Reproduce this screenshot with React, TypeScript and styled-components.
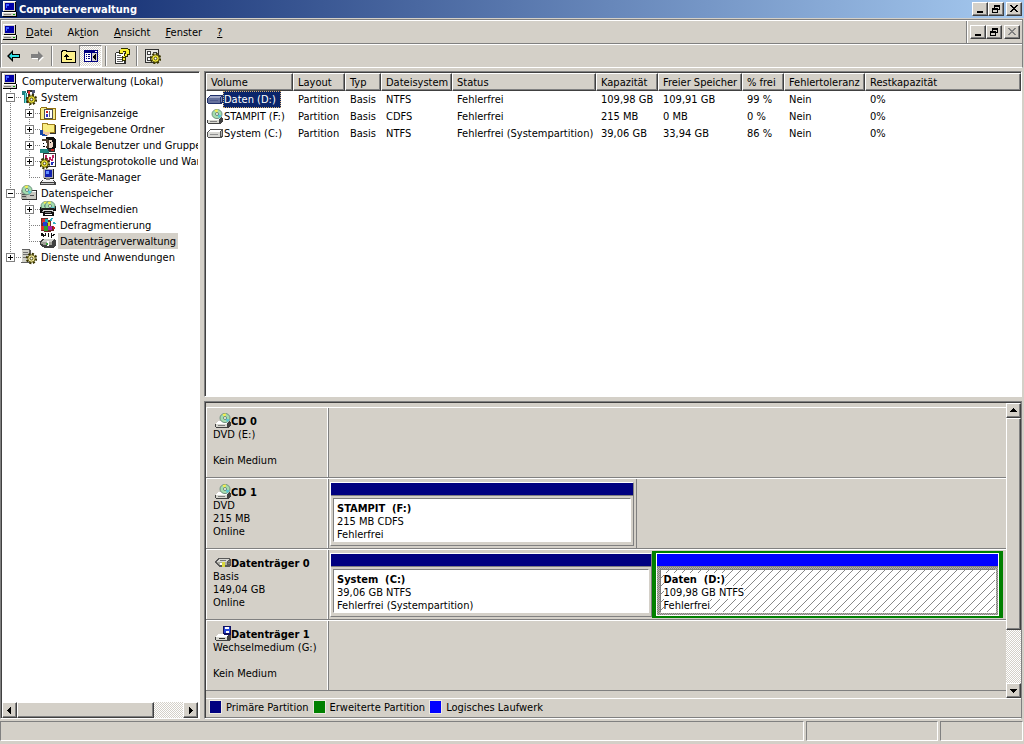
import React from "react";
import styled, { createGlobalStyle, css } from "styled-components";

const face = "#d4d0c8";
const shadow = "#808080";
const dark = "#404040";
const primary = "#000080";
const extended = "#008000";
const logical = "#0000ff";

const GlobalStyle = createGlobalStyle`
  * { box-sizing: border-box; }
  html, body { margin: 0; height: 100%; }
  body {
    background: ${face};
    color: #000;
    font: 11px/13px "DejaVu Sans Condensed", Tahoma, sans-serif;
    overflow: hidden;
  }
  #root { height: 100%; }
  button { font: inherit; color: inherit; padding: 0; border: 0; background: none; }
  ul { list-style: none; margin: 0; padding: 0; }
  svg { display: block; flex: none; }
`;

const raised = css`
  border: 1px solid;
  border-color: #fff ${dark} ${dark} #fff;
  box-shadow: inset -1px -1px ${shadow};
  background: ${face};
`;

const Window = styled.div`
  display: flex;
  flex-direction: column;
  height: 100vh;
`;

const TitleBar = styled.header`
  display: flex;
  align-items: center;
  height: 18px;
  padding: 0 2px;
  background: linear-gradient(to right, #0a246a, #a6caf0);
  color: #fff;
`;

const Title = styled.h1`
  flex: 1;
  margin: 0 0 0 1px;
  font-size: 11px;
  font-weight: bold;
`;

const WindowButtons = styled.div`
  display: flex;
  align-items: center;
`;

const CaptionButton = styled.button<{ $gap?: boolean }>`
  ${raised}
  display: flex;
  align-items: center;
  justify-content: center;
  width: 16px;
  height: 14px;
  margin-left: ${(p) => (p.$gap ? 2 : 0)}px;
`;

const Bars = styled.div`
  margin: 1px 1px 0 0;
  border: 1px solid ${shadow};
  border-bottom-color: #fff;
  box-shadow: inset 1px 1px #fff;
`;

const MenuBar = styled.nav`
  display: flex;
  align-items: center;
  height: 24px;
  padding: 1px 0 0 1px;
  border-bottom: 1px solid ${shadow};
`;

const MenuItem = styled.button`
  margin-left: 1px;
  padding: 2px 7px;
  height: 20px;
`;

const MenuSpace = styled.div`
  flex: 1;
`;

const ChildButtons = styled(WindowButtons)`
  height: 22px;
  padding: 0 2px 0 3px;
  border-left: 1px solid ${shadow};
  box-shadow: inset 1px 0 #fff;
`;

const ToolBar = styled.div`
  display: flex;
  align-items: center;
  height: 23px;
  padding-left: 1px;
  border-top: 1px solid #fff;
`;

const ToolButton = styled.button<{ $pressed?: boolean }>`
  display: flex;
  align-items: center;
  justify-content: center;
  width: 23px;
  height: 22px;
  ${(p) =>
    p.$pressed &&
    css`
      border: 1px solid;
      border-color: ${shadow} #fff #fff ${shadow};
      background: repeating-conic-gradient(#fff 0 25%, ${face} 0 50%) 0 0 / 2px 2px;
    `}
`;

const ToolDivider = styled.span`
  width: 2px;
  height: 20px;
  margin: 0 3px;
  border-left: 1px solid ${shadow};
  border-right: 1px solid #fff;
`;

const Panes = styled.main`
  display: flex;
  gap: 4px;
  flex: 1;
  min-height: 0;
  padding: 3px 2px 0 0;
`;

const sunken = css`
  border: 1px solid;
  border-color: ${shadow} #fff #fff ${shadow};
  box-shadow: inset 1px 1px ${dark};
  padding: 1px 0 0 1px;
`;

const TreePane = styled.aside`
  ${sunken}
  display: flex;
  flex-direction: column;
  width: 200px;
  padding-right: 1px;
  flex: none;
  background: #fff;
`;

const TreeList = styled.ul`
  flex: 1;
  min-height: 0;
  overflow: hidden;
`;

const TreeRow = styled.li`
  display: flex;
  height: 16px;
  white-space: nowrap;
`;

const TreeLabel = styled.span<{ $selected?: boolean }>`
  margin-left: 2px;
  padding: 2px 2px 1px;
  background: ${(p) => (p.$selected ? face : "none")};
`;

const dots = (dir: string) =>
  `repeating-linear-gradient(${dir}, #808080 0 1px, transparent 1px 2px) no-repeat`;

const Guide = styled.span<{ $kind: "pass" | "tee" | "end" | "none" }>`
  flex: none;
  width: 19px;
  height: 16px;
  padding: 4px;
  background: ${(p) =>
    ({
      none: "none",
      pass: `${dots("to bottom")} 8px 0 / 1px 16px`,
      tee: `${dots("to bottom")} 8px 0 / 1px 16px, ${dots("to right")} 8px 8px / 11px 1px`,
      end: `${dots("to bottom")} 8px 0 / 1px 8px, ${dots("to right")} 8px 8px / 11px 1px`,
    })[p.$kind]};
`;

const Expander = styled.button`
  display: block;
  width: 9px;
  height: 9px;
  border: 1px solid ${shadow};
  background: #fff;
`;

const ScrollRow = styled.div<{ $vertical?: boolean }>`
  display: flex;
  flex: none;
  flex-direction: ${(p) => (p.$vertical ? "column" : "row")};
  ${(p) => (p.$vertical ? "width: 15px;" : "height: 16px;")}
  background: repeating-conic-gradient(#fff 0 25%, ${face} 0 50%) 0 0 / 2px 2px;
`;

const ScrollButton = styled.button`
  ${raised}
  display: flex;
  align-items: center;
  justify-content: center;
  flex: none;
  min-width: 15px;
  min-height: 15px;
`;

const ScrollThumb = styled.div<{ $size: string }>`
  ${raised}
  flex: 0 0 ${(p) => p.$size};
`;

const ScrollGap = styled.div`
  flex: 1;
`;

const Detail = styled.section`
  display: flex;
  flex-direction: column;
  gap: 4px;
  flex: 1;
  min-width: 0;
`;

const ListPane = styled.div`
  ${sunken}
  flex: 1;
  min-height: 0;
  overflow: hidden;
  background: #fff;
`;

const VolumeTable = styled.table`
  width: 100%;
  table-layout: fixed;
  border-collapse: separate;
  border-spacing: 0;
  white-space: nowrap;
`;

const HeadCell = styled.th`
  height: 18px;
  padding: 0 0 0 4px;
  text-align: left;
  font-weight: normal;
  overflow: hidden;
  ${raised}
`;

const Cell = styled.td`
  height: 17px;
  padding: 0 0 0 5px;
  overflow: hidden;
`;

const VolumeName = styled.div<{ $selected?: boolean }>`
  display: flex;
  align-items: center;
  margin-left: -4px;
  span {
    padding: 2px 5px 2px 1px;
    ${(p) =>
      p.$selected &&
      css`
        background: #0a246a;
        color: #fff;
        outline: 1px dotted #d8b070;
        outline-offset: -1px;
      `}
  }
`;

const GraphPane = styled.div`
  ${sunken}
  flex: none;
  display: flex;
  flex-direction: column;
  border-right-color: ${shadow};
`;

const GraphBody = styled.div`
  display: flex;
`;

const Disks = styled.div`
  flex: 1;
  min-width: 0;
  padding: 4px 0 7px;
`;

const DiskRow = styled.div`
  display: flex;
  height: 71px;
  border-top: 1px solid #fff;
  border-bottom: 1px solid ${shadow};
`;

const DiskInfo = styled.div`
  flex: none;
  width: 122px;
  padding: 7px 0 0 6px;
  border-left: 1px solid #fff;
  border-right: 1px solid #fff;
  white-space: pre-line;
`;

const DiskName = styled.div`
  display: flex;
  align-items: center;
  height: 13px;
  padding-left: 2px;
  font-weight: bold;
  svg { margin-top: -2px; }
`;

const DiskMap = styled.div`
  display: flex;
  flex: 1;
  min-width: 0;
  border-left: 1px solid ${shadow};
`;

const VolumeFrame = styled.div<{ $share: number; $edge?: boolean }>`
  flex: ${(p) => p.$share} 1 0;
  min-width: 0;
  padding: 3px ${(p) => (p.$edge ? 2 : 0)}px 2px ${(p) => (p.$share === 370 ? 0 : 1)}px;
  ${(p) => p.$edge && `border-right: 1px solid ${shadow};`}
`;

const FreeSpace = styled.div<{ $share: number }>`
  flex: ${(p) => p.$share} 1 0;
`;

const ExtendedFrame = styled.div<{ $share: number }>`
  flex: ${(p) => p.$share} 1 0;
  min-width: 0;
  margin: 1px 3px 1px 0;
  border: 3px solid ${extended};
  border-width: 2px 4px;
`;

const VolumeBox = styled.button<{ $color: string; $selected?: boolean }>`
  display: flex;
  flex-direction: column;
  width: 100%;
  height: 100%;
  text-align: left;
  border: 1px solid;
  border-color: #fff ${shadow} ${shadow} #fff;
  ${(p) => p.$selected && "border-color: #fff;"}
  background: ${(p) =>
    p.$selected
      ? `repeating-conic-gradient(${shadow} 0 25%, #b8b4ac 0 50%) 0 0 / 2px 2px`
      : face};
  &::before {
    content: "";
    width: 100%;
    height: 12px;
    flex: none;
    background: ${(p) => p.$color};
    border-bottom: 1px solid ${shadow};
  }
`;

const VolumeText = styled.span<{ $hatched?: boolean }>`
  display: flex;
  flex-direction: column;
  align-items: flex-start;
  align-self: stretch;
  flex: 1;
  margin: 2px 2px 3px ${(p) => (p.$hatched ? 3 : 2)}px;
  padding: 3px 0 0 3px;
  border: 1px solid;
  border-color: ${shadow} #fff #fff ${shadow};
  background: ${(p) =>
    p.$hatched
      ? "linear-gradient(135deg, #fff 46%, #888 46% 54%, #fff 54%) 0 0 / 8px 8px"
      : "#fff"};
  white-space: pre;
  > * { background: #fff; }
`;

const Legend = styled.div`
  display: flex;
  align-items: center;
  height: 20px;
  padding: 0 0 2px 4px;
  border-top: 1px solid #fff;
  border-bottom: 1px solid ${shadow};
`;

const LegendItem = styled.span<{ $color: string }>`
  display: flex;
  align-items: center;
  margin-right: 5px;
  &::before {
    content: "";
    width: 11px;
    height: 12px;
    margin-right: 5px;
    background: ${(p) => p.$color};
    outline: 1px solid #ece9e0;
  }
`;

const StatusBar = styled.footer`
  display: flex;
  gap: 2px;
  flex: none;
  height: 25px;
  padding: 2px 1px 3px 0;
`;

const StatusCell = styled.div<{ $width?: number }>`
  ${(p) => (p.$width ? `width: ${p.$width}px;` : "flex: 1;")}
  border: 1px solid;
  border-color: ${shadow} #fff #fff ${shadow};
`;

/* ---------- icons ---------- */

const Svg = ({ children, w = 16, h = 16 }: { children: React.ReactNode; w?: number; h?: number }) => (
  <svg width={w} height={h} viewBox={`0 0 ${w} ${h}`} shapeRendering="crispEdges" aria-hidden="true">
    {children}
  </svg>
);

const Computer = () => (
  <Svg>
    <path d="M1 0h13v10H1z" fill="#d4d0c8" />
    <path d="M1 0h12v1H2v9H1z" fill="#fff" />
    <path d="M13 1h1v10H2v-1h11z" fill="#000" />
    <path d="M3 2h9v7H3z" fill="#0000a8" />
    <path d="M4 3h3v2H5v2H4z" fill="#4060ff" />
    <path d="M0 11h15v4H0z" fill="#d4d0c8" />
    <path d="M0 11h14v1H1v3H0z" fill="#fff" />
    <path d="M14 11h1v5H1v-1h13z" fill="#000" />
    <path d="M2 13h7v1H2z" fill="#808080" />
    <path d="M11 13h2v1h-2z" fill="#00a000" />
  </Svg>
);

const Disc = ({ x, y }: { x: number; y: number }) => (
  <g transform={`translate(${x} ${y})`} shapeRendering="auto">
    <ellipse cx="5" cy="5" rx="5" ry="4.6" fill="#a4dcae" stroke="#5c8070" strokeWidth=".8" />
    <path d="M5 5 2.500 1.200A5 4.600 0 0 1 6 .5z" fill="#f6ee50" />
    <path d="M5 5 9.500 6.500A5 4.600 0 0 1 7 9z" fill="#58c8d8" />
    <circle cx="5" cy="5" r="1.5" fill="#fff" stroke="#406050" strokeWidth=".7" />
  </g>
);

const Gear = ({ x, y, fill = "#e4dc38" }: { x: number; y: number; fill?: string }) => (
  <g transform={`translate(${x} ${y})`} shapeRendering="auto">
    <circle cx="5.500" cy="5.500" r="4.500" fill="none" stroke="#383400" strokeWidth="2.400" strokeDasharray="2 1.500" />
    <circle cx="5.500" cy="5.500" r="3.700" fill={fill} stroke="#504a00" strokeWidth=".8" />
    <circle cx="5.500" cy="5.500" r="1.400" fill="#fff" stroke="#403c00" strokeWidth=".9" />
  </g>
);

const CdDrive = () => (
  <Svg>
    <path d="M3 8h11l2 1v3l-2 3H1l-1-1v-3z" fill="#404040" />
    <path d="M3 8h11l-2 3H1z" fill="#fff" />
    <path d="M1 11h11v3H1z" fill="#d8d8d0" />
    <path d="M3 12h7v1H3z" fill="#808080" />
    <Disc x={5} y={0} />
  </Svg>
);

const Drive = ({ selected }: { selected?: boolean }) => (
  <Svg>
    <path d="M3 3h12l1 1v6l-2 2H2l-2-1V6z" fill={selected ? "#20306c" : "#505050"} />
    <path d="M3 4h11l-1 2H1z" fill={selected ? "#a0a8c8" : "#fff"} />
    <path d="M1 6h12v5H1z" fill={selected ? "#65719d" : "#d8d8d4"} />
    <path d="M3 8h8v1H3z" fill={selected ? "#4c588c" : "#909090"} />
    <path d="M14 5h1v5h-1z" fill={selected ? "#7c86b0" : "#b0b0b0"} />
  </Svg>
);

const HardDisk = () => (
  <Svg>
    <path d="M3 3h11l2 2v5l-2 2H5l-5-4V6z" fill="#585858" />
    <path d="M4 4h10l-2 3H1z" fill="#d8d8d4" />
    <path d="M1 7h11v3H4z" fill="#a8a8a0" />
    <path d="M5 5h6v1H5zM13 6h2v1h-2zM13 8h2v1h-2z" fill="#787878" />
    <path d="M7 7h3v5H7z" fill="#d8d840" />
    <path d="M5 8h2v2H5z" fill="#fff" />
  </Svg>
);

const Removable = () => (
  <Svg>
    <path d="M3 8h11l2 1v4l-2 2H1l-1-1v-3z" fill="#404040" />
    <path d="M3 8h11l-2 3H1z" fill="#fff" />
    <path d="M1 11h11v3H1z" fill="#d8d8d0" />
    <path d="M4 12h6v1H4z" fill="#303030" />
    <path d="M8 0h8v9H9V8H8z" fill="#101060" />
    <path d="M9 1h6v6H9z" fill="#2848d8" />
    <path d="M10 1h4v2h-4zM11 5h3v2h-3z" fill="#fff" />
  </Svg>
);

const Tools = () => (
  <Svg>
    <path d="M1 2h4v2h1v10H3V6H1z" fill="#208080" />
    <path d="M4 4h1v10H4z" fill="#60e0e0" />
    <path d="M6 1h5v2H9v9H7V4H6z" fill="#303030" />
    <path d="M7 2h2v3H7z" fill="#e03030" />
    <path d="M11 1h3v3h-1v4h-2z" fill="#505878" />
    <path d="M6 8h2v6H6z" fill="#d02020" />
    <Gear x={5} y={5} />
  </Svg>
);

const EventLog = () => (
  <Svg>
    <path d="M0 3h1V2h6v1h9v12H0z" fill="#907010" />
    <path d="M1 3h5v1h9v10H1z" fill="#f8ec88" />
    <path d="M4 4h9v10H4z" fill="#505050" />
    <path d="M5 5h7v8H5z" fill="#fff" />
    <path d="M6 6h2v2H6z" fill="#d02020" />
    <path d="M6 9h2v3H6z" fill="#3030d0" />
    <path d="M9 6h1v6H9z" fill="#606060" />
  </Svg>
);

const SharedFolder = () => (
  <Svg>
    <path d="M2 2h5l1 1h7v9H2z" fill="#a08020" />
    <path d="M3 3h4v1h7v7H3z" fill="#f8ec80" />
    <path d="M15 4h1v9H4v-1h11z" fill="#303030" />
    <path d="M0 9h3l3 2h4v2l-3 2H4l-4-2z" fill="#f0c8a0" />
    <path d="M0 9h3v4l4 1v1H3l-3-1z" fill="#1848a8" />
  </Svg>
);

const Users = () => (
  <Svg>
    <path d="M6 0h8l2 3v7l-2 3H7z" fill="#101010" />
    <path d="M9 3h3l1 3v3l-2 2H9z" fill="#f0d8c8" />
    <path d="M2 2h5l2 2v7H2V4z" fill="#504030" />
    <path d="M2 4h4l1 3-1 5H3L1 9z" fill="#fff" />
    <path d="M3 6h1v1H3zM3 9h2v1H3zM10 5h1v1h-1z" fill="#000" />
    <path d="M0 12h7l2 2v2H0z" fill="#208880" />
    <path d="M8 12h7v3H9z" fill="#303030" />
    <path d="M11 12h3v2h-3z" fill="#c02020" />
  </Svg>
);

const Performance = () => (
  <Svg>
    <path d="M3 0h13v14H3z" fill="#303030" />
    <path d="M4 1h11v12H4z" fill="#fff" />
    <path d="M5 2h2v3h1v2h1V4h2v2h1V2h2v3h-1v3h-2V7h-1v2H8V8H7V6H5z" fill="#c02060" />
    <path d="M11 9h3v1h-1v2h-2z" fill="#2030c0" />
    <Gear x={-1} y={5} />
  </Svg>
);

const DeviceManager = () => (
  <Svg>
    <path d="M3 0h11v9H3z" fill="#b0b0b0" />
    <path d="M14 0v10H4V9h9V0z" fill="#202020" />
    <path d="M5 1h7v7H5z" fill="#1020b0" />
    <path d="M6 2h3v3H6z" fill="#6090ff" />
    <path d="M2 11h12l2 3v2H0v-2z" fill="#404040" />
    <path d="M3 11h10l1 2H2z" fill="#f0f0f0" />
    <path d="M1 14h13v1H1z" fill="#c0c0c0" />
    <path d="M6 9h4v2H6z" fill="#808080" />
  </Svg>
);

const Storage = () => (
  <Svg>
    <path d="M0 5h15l1 1v9H1z" fill="#303030" />
    <path d="M0 5h6v9H0z" fill="#b0b0a8" />
    <path d="M6 6h9v8H6z" fill="#c8c8c0" />
    <path d="M1 9h4v1H1zM1 11h4v1H1zM9 10h4v1H9z" fill="#505050" />
    <path d="M7 6h8v1H7z" fill="#fff" />
    <Disc x={1} y={0} />
  </Svg>
);

const RemovableMedia = () => (
  <Svg>
    <path d="M1 5h15v5h-2v5H3v-3H0V8z" fill="#101010" />
    <path d="M5 13h7v1H5z" fill="#fff" />
    <path d="M2 10h2v1H2zM12 10h2v1h-2z" fill="#a0a0a0" />
    <path d="M5 11h6v1H5z" fill="#808080" />
    <Disc x={1} y={0} />
    <Disc x={5} y={0} />
    <path d="M2 7h12v2H2z" fill="#202020" />
    <path d="M3 9h10v1H3z" fill="#e0e0e0" />
  </Svg>
);

const Defrag = () => (
  <Svg>
    <path d="M1 1h7v2h3v6h3v5h-3v1H4v-1H1z" fill="#702828" />
    <path d="M2 2h3v4H2zM1 9h3v4H1z" fill="#e03030" />
    <path d="M5 2h3v4H5z" fill="#20b0b0" />
    <path d="M3 5h4v4H3z" fill="#2040d0" />
    <path d="M4 9h4v5H4z" fill="#30a030" />
    <path d="M8 5h2v4H8z" fill="#e0d020" />
    <path d="M8 9h4v4H8z" fill="#b020b0" />
    <path d="M11 1h2v1h-1v2h-2V2h1zM13 5h2v1h1v1h-3z" fill="#30b0c0" />
    <path d="M13 9h1v1h1v2h-2z" fill="#d02020" />
  </Svg>
);

const DiskManagement = () => (
  <Svg>
    <path d="M1 0h2v1h1v1h1V0h1v3H4v1H3V3H1zM8 0h1v4H8zM11 0h1v2h1V1h2v1h-1v1h-2v2h-1z" fill="#101010" />
    <path d="M3 6h11l2 2v4l-3 3H5l-5-3V8z" fill="#404040" />
    <path d="M4 6h10l-2 3H1z" fill="#d0d0cc" />
    <path d="M1 9h11v3H5l-4-1z" fill="#a0a098" />
    <path d="M7 8h2v5H7z" fill="#fff" />
    <path d="M6 10h2v2H6z" fill="#40a040" />
  </Svg>
);

const Services = () => (
  <Svg>
    <path d="M1 0h7l2 2v12H0v-1h1z" fill="#606060" />
    <path d="M1 1h7v12H1z" fill="#d0d0c8" />
    <path d="M2 3h5v1H2zM2 5h5v1H2zM2 8h3v1H2z" fill="#707070" />
    <Gear x={5} y={4} fill="#ece49c" />
  </Svg>
);

const Arrow = ({ back }: { back?: boolean }) =>
  back ? (
    <Svg>
      <path d="M1 8l6-6v4h7v4H7v4z" fill="#000" shapeRendering="auto" />
      <path d="M3 8l3-3v2h7v2H6v2z" fill="#30e0e8" shapeRendering="auto" />
    </Svg>
  ) : (
    <Svg>
      <path d="M15 9l-5 5v-3H3V9z" fill="#fff" shapeRendering="auto" />
      <path d="M14 8L9 3v3H2v4h7v3z" fill="#808080" shapeRendering="auto" />
    </Svg>
  );

const UpFolder = () => (
  <Svg>
    <path d="M1 3h1V2h5v1h9v12H1z" fill="#000" />
    <path d="M2 4h1V3h3v1h9v10H2z" fill="#fcf08c" />
    <path d="M6 6h1v1h1v1h1v1H7v2h5v1H6V9H4V8h1V7h1z" fill="#000" />
  </Svg>
);

const TreeToggle = () => (
  <Svg>
    <path d="M1 2h14v12H1z" fill="#000080" />
    <path d="M2 5h6v8H2z" fill="#fff" />
    <path d="M9 5h5v8H9z" fill="#d4d0c8" />
    <path d="M12 3h2v1h-2z" fill="#fff" />
    <path d="M3 6h1v1H3zM3 8h1v1H3zM3 10h1v1H3zM5 6h2v1H5zM5 8h2v1H5zM5 10h2v1H5z" fill="#000080" />
    <path d="M13 6v6h-1v-1h-1v-1h-1V8h1V7h1V6z" fill="#000" />
  </Svg>
);

const HelpSheet = () => (
  <Svg>
    <path d="M2 4h7v1h3v11H1V5z" fill="#303030" />
    <path d="M2 5h8v10H2z" fill="#fff" />
    <path d="M3 7h4v1H3zM3 9h5v1H3zM3 11h5v1H3zM3 13h6v1H3z" fill="#606060" />
    <path d="M7 0h7v1h2v6h-2v2h-2v4H8V8h2V6h1V4H9v2H5V2h2z" fill="#303000" />
    <path d="M7 1h7v1h1v4h-2v2h-2v1H9V8h2V6h1V3H9v2H6V2h1zM9 10h2v2H9z" fill="#f8f030" />
  </Svg>
);

const SettingsSheet = () => (
  <Svg>
    <path d="M0 1h14v14H0z" fill="#303030" />
    <path d="M1 2h12v12H1z" fill="#e8e8e4" />
    <path d="M2 3h4v4H2zM2 9h4v4H2zM8 4h4v1H8z" fill="#404040" />
    <path d="M3 4h2v2H3zM3 10h2v2H3z" fill="#fff" />
    <Gear x={5} y={5} fill="#f0e840" />
  </Svg>
);

const captionPaths = {
  min: "M2 7h6v2H2z",
  restore: "M3 1h6v5H7v3H1V4h2zM4 3v1h3v1h1V3zM2 6v2h4V6z",
  close: "M1 1h2v1h1v1h2V2h1V1h2v1H8v1H7v1H6v1h1v1h1v1h1v1H7V7H6V6H4v1H3v1H1V7h1V6h1V5h1V4H3V3H2V2H1z",
};

const CaptionGlyph = ({ kind, color = "#000" }: { kind: keyof typeof captionPaths; color?: string }) => (
  <Svg w={10} h={10}>
    <path d={captionPaths[kind]} fill={color} fillRule="evenodd" />
  </Svg>
);

const ScrollGlyph = ({ d }: { d: string }) => (
  <Svg w={7} h={7}>
    <path d={d} />
  </Svg>
);

/* ---------- data ---------- */

type GuideKind = "pass" | "tee" | "end" | "none";
type Node = {
  label: string;
  icon: React.ReactNode;
  guides: GuideKind[];
  box?: "+" | "-";
  selected?: boolean;
};

const nodes: Node[] = [
  { label: "Computerverwaltung (Lokal)", icon: <Computer />, guides: [] },
  { label: "System", icon: <Tools />, guides: ["tee"], box: "-" },
  { label: "Ereignisanzeige", icon: <EventLog />, guides: ["pass", "tee"], box: "+" },
  { label: "Freigegebene Ordner", icon: <SharedFolder />, guides: ["pass", "tee"], box: "+" },
  { label: "Lokale Benutzer und Gruppen", icon: <Users />, guides: ["pass", "tee"], box: "+" },
  { label: "Leistungsprotokolle und Warnungen", icon: <Performance />, guides: ["pass", "tee"], box: "+" },
  { label: "Geräte-Manager", icon: <DeviceManager />, guides: ["pass", "end"] },
  { label: "Datenspeicher", icon: <Storage />, guides: ["tee"], box: "-" },
  { label: "Wechselmedien", icon: <RemovableMedia />, guides: ["pass", "tee"], box: "+" },
  { label: "Defragmentierung", icon: <Defrag />, guides: ["pass", "tee"] },
  { label: "Datenträgerverwaltung", icon: <DiskManagement />, guides: ["pass", "end"], selected: true },
  { label: "Dienste und Anwendungen", icon: <Services />, guides: ["end"], box: "+" },
];

const columns: [string, number?][] = [
  ["Volume", 87],
  ["Layout", 52],
  ["Typ", 36],
  ["Dateisystem", 71],
  ["Status", 144],
  ["Kapazität", 62],
  ["Freier Speicher", 84],
  ["% frei", 42],
  ["Fehlertoleranz", 81],
  ["Restkapazität"],
];

const volumes = [
  {
    icon: <Drive selected />,
    selected: true,
    cells: ["Daten (D:)", "Partition", "Basis", "NTFS", "Fehlerfrei", "109,98 GB", "109,91 GB", "99 %", "Nein", "0%"],
  },
  {
    icon: <CdDrive />,
    cells: ["STAMPIT (F:)", "Partition", "Basis", "CDFS", "Fehlerfrei", "215 MB", "0 MB", "0 %", "Nein", "0%"],
  },
  {
    icon: <Drive />,
    cells: ["System (C:)", "Partition", "Basis", "NTFS", "Fehlerfrei (Systempartition)", "39,06 GB", "33,94 GB", "86 %", "Nein", "0%"],
  },
];

const Volume = ({ name, lines, color, selected }: { name: string; lines: string[]; color: string; selected?: boolean }) => (
  <VolumeBox $color={color} $selected={selected}>
    <VolumeText $hatched={selected}>
      <b>{name}</b>
      {lines.map((line) => (
        <span key={line}>{line}</span>
      ))}
    </VolumeText>
  </VolumeBox>
);

const Disk = ({ icon, name, info, children }: { icon: React.ReactNode; name: string; info: string; children?: React.ReactNode }) => (
  <DiskRow>
    <DiskInfo>
      <DiskName>
        {icon}
        {name}
      </DiskName>
      {info}
    </DiskInfo>
    <DiskMap>{children}</DiskMap>
  </DiskRow>
);

export default function App() {
  return (
    <Window>
      <GlobalStyle />
      <TitleBar>
        <Computer />
        <Title>Computerverwaltung</Title>
        <WindowButtons>
          <CaptionButton aria-label="Minimieren"><CaptionGlyph kind="min" /></CaptionButton>
          <CaptionButton aria-label="Wiederherstellen"><CaptionGlyph kind="restore" /></CaptionButton>
          <CaptionButton $gap aria-label="Schließen"><CaptionGlyph kind="close" /></CaptionButton>
        </WindowButtons>
      </TitleBar>

      <Bars>
        <MenuBar>
          <Computer />
          <MenuItem><u>D</u>atei</MenuItem>
          <MenuItem>Ak<u>t</u>ion</MenuItem>
          <MenuItem><u>A</u>nsicht</MenuItem>
          <MenuItem><u>F</u>enster</MenuItem>
          <MenuItem><u>?</u></MenuItem>
          <MenuSpace />
          <ChildButtons>
            <CaptionButton aria-label="Minimieren"><CaptionGlyph kind="min" /></CaptionButton>
            <CaptionButton aria-label="Wiederherstellen"><CaptionGlyph kind="restore" /></CaptionButton>
            <CaptionButton $gap disabled aria-label="Schließen"><CaptionGlyph kind="close" color={shadow} /></CaptionButton>
          </ChildButtons>
        </MenuBar>
        <ToolBar>
          <ToolButton aria-label="Zurück"><Arrow back /></ToolButton>
          <ToolButton aria-label="Vorwärts"><Arrow /></ToolButton>
          <ToolDivider />
          <ToolButton aria-label="Eine Ebene nach oben"><UpFolder /></ToolButton>
          <ToolButton $pressed aria-label="Struktur ein-/ausblenden"><TreeToggle /></ToolButton>
          <ToolDivider />
          <ToolButton aria-label="Hilfe"><HelpSheet /></ToolButton>
          <ToolDivider />
          <ToolButton aria-label="Einstellungen"><SettingsSheet /></ToolButton>
        </ToolBar>
      </Bars>

      <Panes>
        <TreePane>
          <TreeList>
            {nodes.map((n) => (
              <TreeRow key={n.label}>
                {n.guides.map((g, i) => (
                  <Guide key={i} $kind={g}>
                    {n.box && i === n.guides.length - 1 && (
                      <Expander aria-label={n.label}>
                        <Svg w={7} h={7}>
                          <path d={n.box === "+" ? "M1 3h5v1H1zM3 1h1v5H3z" : "M1 3h5v1H1z"} />
                        </Svg>
                      </Expander>
                    )}
                  </Guide>
                ))}
                {n.icon}
                <TreeLabel $selected={n.selected}>{n.label}</TreeLabel>
              </TreeRow>
            ))}
          </TreeList>
          <ScrollRow>
            <ScrollButton aria-label="Nach links"><ScrollGlyph d="M5 0v7H4V6H3V5H2V4H1V3h1V2h1V1h1V0z" /></ScrollButton>
            <ScrollThumb $size="70%" />
            <ScrollGap />
            <ScrollButton aria-label="Nach rechts"><ScrollGlyph d="M2 0v7h1V6h1V5h1V4h1V3H5V2H4V1H3V0z" /></ScrollButton>
          </ScrollRow>
        </TreePane>

        <Detail>
          <ListPane>
            <VolumeTable>
              <colgroup>
                {columns.map(([name, width]) => (
                  <col key={name} width={width} />
                ))}
              </colgroup>
              <thead>
                <tr>
                  {columns.map(([name]) => (
                    <HeadCell key={name}>{name}</HeadCell>
                  ))}
                </tr>
              </thead>
              <tbody>
                {volumes.map((v) => (
                  <tr key={v.cells[0]}>
                    {v.cells.map((text, i) => (
                      <Cell key={i}>
                        {i === 0 ? (
                          <VolumeName $selected={v.selected}>
                            {v.icon}
                            <span>{text}</span>
                          </VolumeName>
                        ) : (
                          text
                        )}
                      </Cell>
                    ))}
                  </tr>
                ))}
              </tbody>
            </VolumeTable>
          </ListPane>

          <GraphPane>
            <GraphBody>
              <Disks>
                <Disk icon={<CdDrive />} name="CD 0" info={"DVD (E:)\n\nKein Medium"} />
                <Disk icon={<CdDrive />} name="CD 1" info={"DVD\n215 MB\nOnline"}>
                  <VolumeFrame $share={304} $edge>
                    <Volume name="STAMPIT  (F:)" lines={["215 MB CDFS", "Fehlerfrei"]} color={primary} />
                  </VolumeFrame>
                  <FreeSpace $share={370} />
                </Disk>
                <Disk icon={<HardDisk />} name="Datenträger 0" info={"Basis\n149,04 GB\nOnline"}>
                  <VolumeFrame $share={322}>
                    <Volume name="System  (C:)" lines={["39,06 GB NTFS", "Fehlerfrei (Systempartition)"]} color={primary} />
                  </VolumeFrame>
                  <ExtendedFrame $share={344}>
                    <Volume name="Daten  (D:)" lines={["109,98 GB NTFS", "Fehlerfrei"]} color={logical} selected />
                  </ExtendedFrame>
                </Disk>
                <Disk icon={<Removable />} name="Datenträger 1" info={"Wechselmedium (G:)\n\nKein Medium"} />
              </Disks>
              <ScrollRow $vertical>
                <ScrollButton aria-label="Nach oben"><ScrollGlyph d="M0 5h7V4H6V3H5V2H4V1H3v1H2v1H1v1H0z" /></ScrollButton>
                <ScrollThumb $size="72%" />
                <ScrollGap />
                <ScrollButton aria-label="Nach unten"><ScrollGlyph d="M0 2h7v1H6v1H5v1H4v1H3V5H2V4H1V3H0z" /></ScrollButton>
              </ScrollRow>
            </GraphBody>
            <Legend>
              <LegendItem $color={primary}>Primäre Partition</LegendItem>
              <LegendItem $color={extended}>Erweiterte Partition</LegendItem>
              <LegendItem $color={logical}>Logisches Laufwerk</LegendItem>
            </Legend>
          </GraphPane>
        </Detail>
      </Panes>

      <StatusBar>
        <StatusCell />
        <StatusCell $width={132} />
        <StatusCell $width={83} />
      </StatusBar>
    </Window>
  );
}
